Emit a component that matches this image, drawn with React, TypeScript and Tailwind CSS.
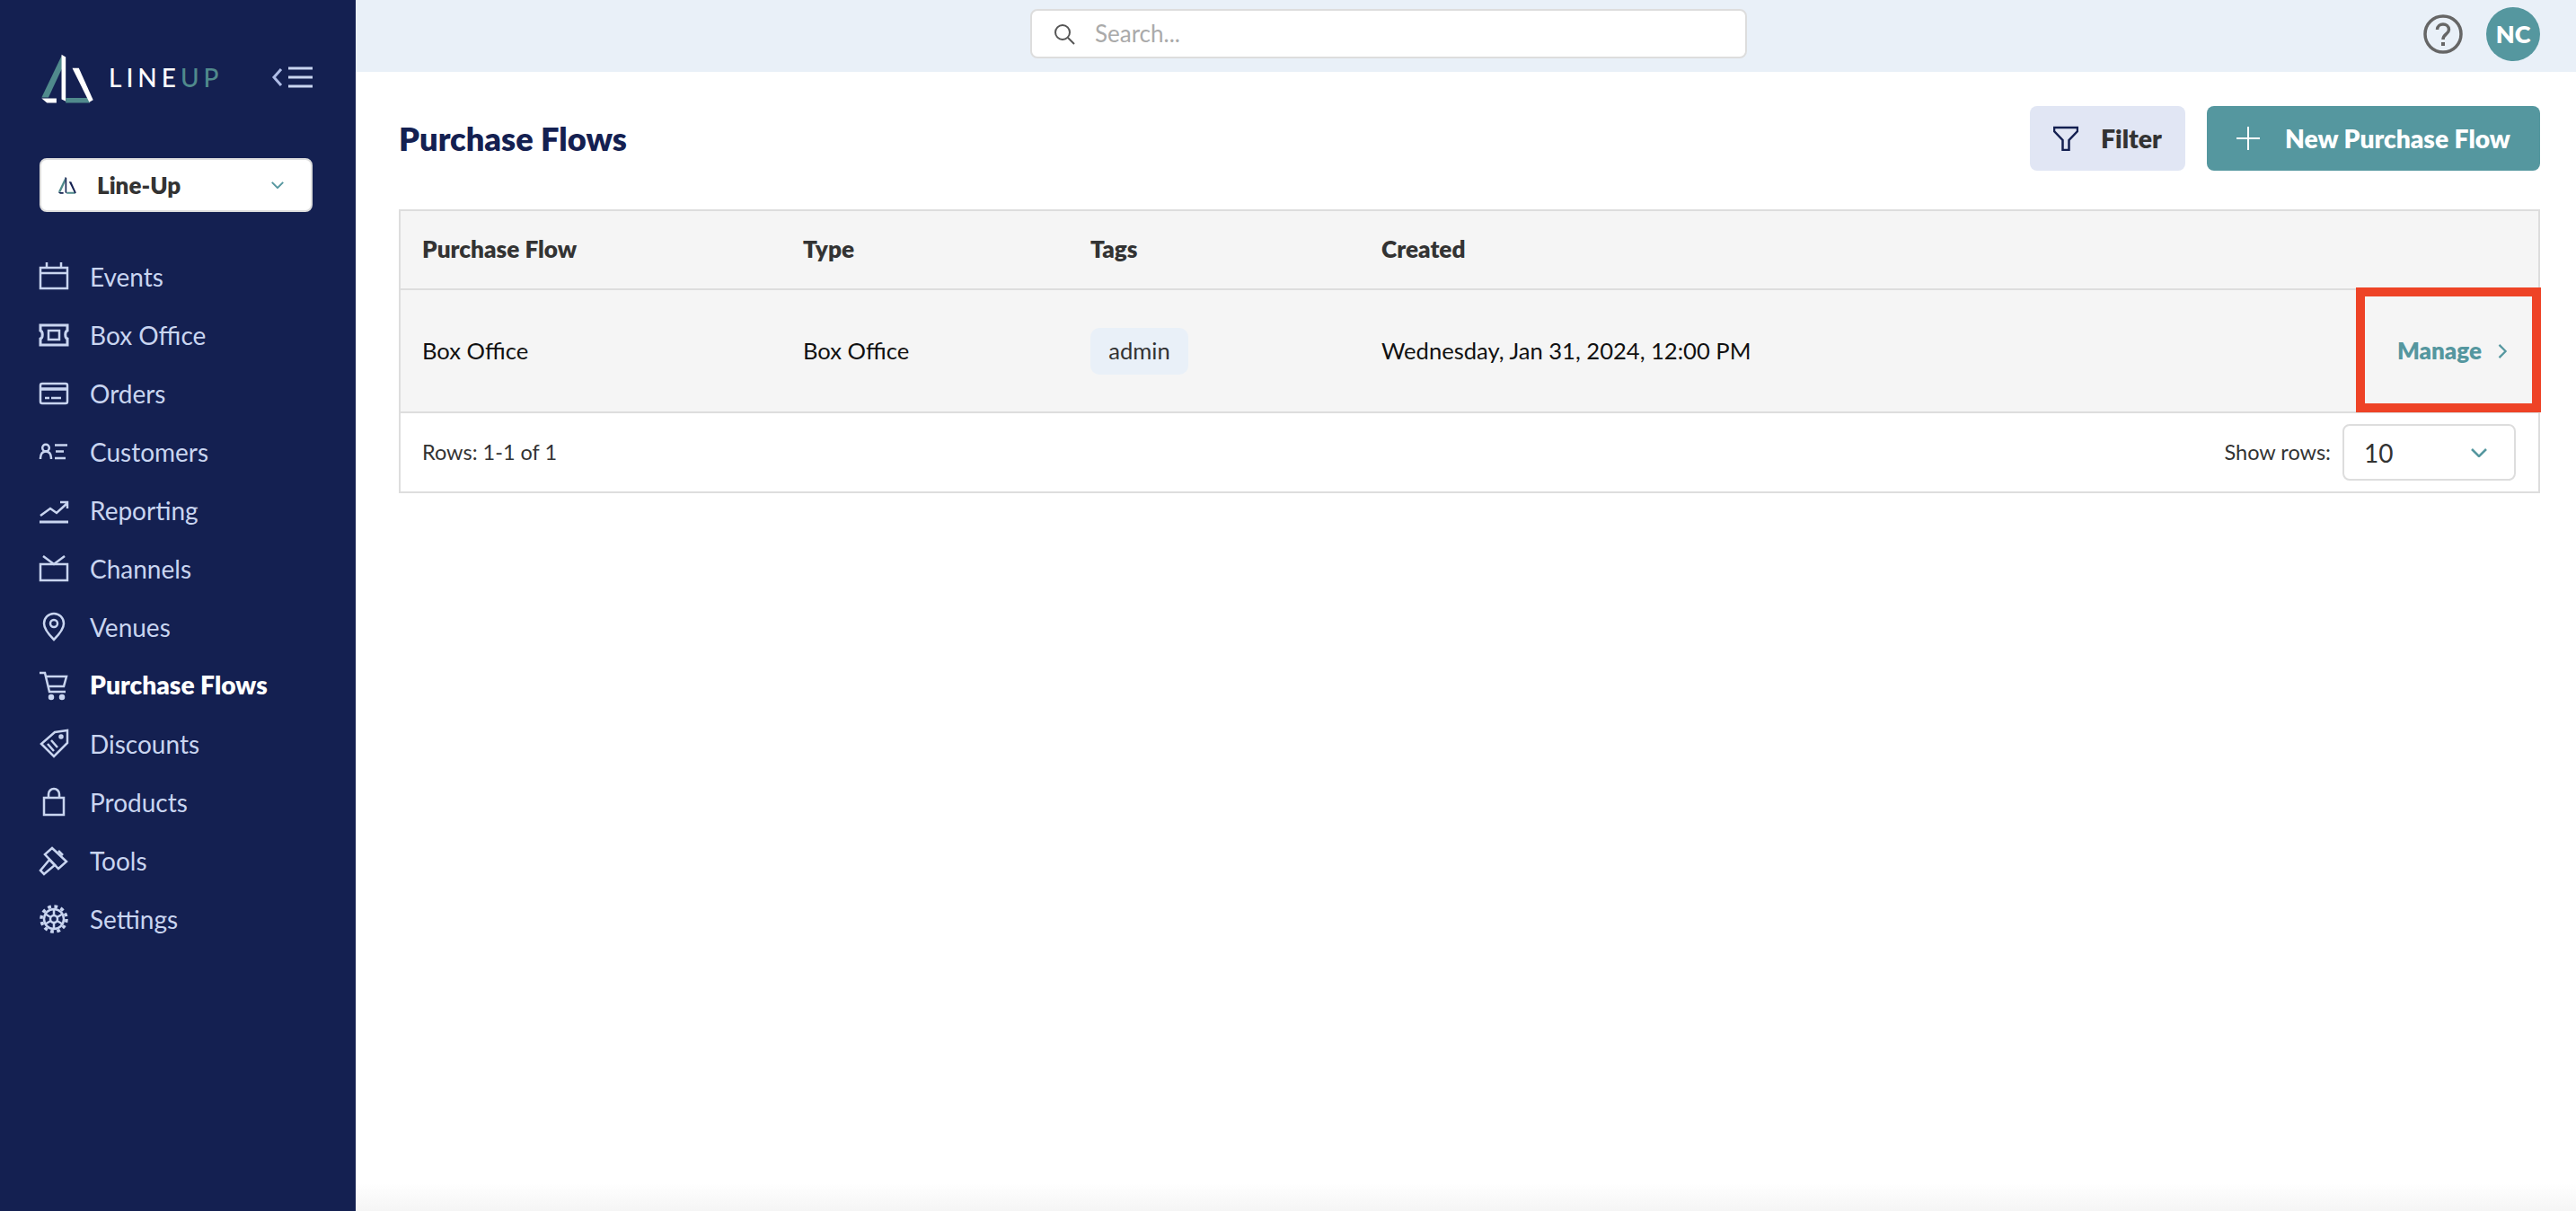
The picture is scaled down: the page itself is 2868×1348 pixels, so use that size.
import { ReactNode } from "react"

const navItems: { label: string; active?: boolean; icon: ReactNode }[] = [
  {
    label: "Events",
    icon: (
      <>
        <rect x="1" y="6" width="30" height="23" />
        <path d="M1 12H31M8 6V0M24 6V0" />
      </>
    ),
  },
  {
    label: "Box Office",
    icon: (
      <>
        <path d="M1 5H31V11C28 12 28 19 31 20V27H1V20C4 19 4 12 1 11Z" strokeWidth="3" />
        <rect x="10" y="11" width="12" height="10" />
      </>
    ),
  },
  {
    label: "Orders",
    icon: (
      <>
        <rect x="1" y="5" width="30" height="22" rx="2" />
        <path d="M1 11H31" strokeWidth="3.5" />
        <path d="M6 21H11M13 21H24" />
      </>
    ),
  },
  {
    label: "Customers",
    icon: (
      <>
        <circle cx="7" cy="11.5" r="3.8" />
        <path d="M1 24C1 19 3 15.5 7 15.5C11 15.5 13 19 13 24" />
        <path d="M17 8.5H31M18 15.5H27M17 23H29" />
      </>
    ),
  },
  {
    label: "Reporting",
    icon: (
      <>
        <path d="M1 22L12 14L19 19L31 8M23 7H31V14" />
        <path d="M0 29H32" strokeWidth="3" />
      </>
    ),
  },
  {
    label: "Channels",
    icon: (
      <>
        <rect x="1" y="11" width="30" height="18" />
        <path d="M4 2L16 11L28 2" />
      </>
    ),
  },
  {
    label: "Venues",
    icon: (
      <>
        <path d="M16 30C10 24 5 18 5 12A11 11 0 0 1 27 12C27 18 22 24 16 30Z" />
        <circle cx="16" cy="12" r="4" />
      </>
    ),
  },
  {
    label: "Purchase Flows",
    active: true,
    icon: (
      <>
        <path d="M0 2H6L11 23H29M7 6H30L27 17H9.5" />
        <circle cx="13" cy="29" r="2" fill="currentColor" />
        <circle cx="25" cy="29" r="2" fill="currentColor" />
      </>
    ),
  },
  {
    label: "Discounts",
    icon: (
      <>
        <path d="M17 3L31 1V15L16 30L2 16Z" />
        <circle cx="24" cy="8" r="1.5" />
        <path d="M9 16L16 24M13 12L20 20" />
      </>
    ),
  },
  {
    label: "Products",
    icon: (
      <>
        <rect x="5" y="11" width="22" height="19" />
        <path d="M10 11V7A6 6 0 0 1 22 7V11" />
      </>
    ),
  },
  {
    label: "Tools",
    icon: (
      <>
        <path d="M14 2L30 17L21 25L6 9Z" />
        <path d="M11 15L17 21L5 31L1 27Z" />
        <path d="M21 5L26 10" />
      </>
    ),
  },
  {
    label: "Settings",
    icon: (
      <>
        <circle cx="16" cy="16" r="11" />
        <circle cx="16" cy="16" r="14" strokeWidth="3.5" strokeDasharray="3.8 3.53" />
        <circle cx="16" cy="16" r="4" />
        <path d="M16 5V12M16 20V27M6.5 10.5L12.5 14M19.5 18L25.5 21.5M6.5 21.5L12.5 18M19.5 14L25.5 10.5" />
      </>
    ),
  },
]

const LogoMark = ({ dark }: { dark?: boolean }) => (
  <svg
    viewBox="130 170 190 180"
    className={dark ? "h-[21px] w-[22px]" : "h-[60px] w-[63px]"}
  >
    <path d="M205 180V225L160 322H137Z" fill={dark ? "#4f8a8b" : "#508a8c"} />
    <path d="M137 325H187V340H155Z" fill={dark ? "#142051" : "#ffffff"} />
    <path d="M204 178L218 186V335L204 328Z" fill={dark ? "#142051" : "#ffffff"} />
    <path d="M218 323H292L300 340H218Z" fill={dark ? "#4f8a8b" : "#508a8c"} />
    <path d="M240 223H262L310 330L297 338Z" fill={dark ? "#142051" : "#ffffff"} />
  </svg>
)

const Chevron = ({ className }: { className: string }) => (
  <svg viewBox="0 0 18 10" fill="none" stroke="#55979f" strokeWidth="2.5" className={className}>
    <path d="M1 1L9 9L17 1" />
  </svg>
)

const Sidebar = () => (
  <aside className="flex h-full w-[396px] shrink-0 flex-col bg-[#142051] pl-[44px] pr-[48px]">
    <div className="flex h-[176px] items-start justify-between">
      <div className="mt-[58px] flex items-start">
        <LogoMark />
        <span className="ml-[14px] mt-[10px] text-[28px] font-medium leading-[36px] tracking-[5px] text-white">
          LINE<span className="text-[#508a8c]">UP</span>
        </span>
      </div>
      <svg viewBox="0 0 46 24" fill="none" strokeWidth="3" className="mt-[74px] h-[24px] w-[46px]">
        <path d="M11 3L3 12L11 21" stroke="#aebce6" />
        <path d="M19 2H46M19 12H46M19 22H46" stroke="#c9d5f0" />
      </svg>
    </div>

    <div className="flex h-[60px] items-center rounded-lg border-2 border-[#dddddd] bg-white pl-[18px] pr-[30px]">
      <LogoMark dark />
      <span className="ml-[22px] flex-1 text-[26px] font-extrabold text-[#333333]">Line-Up</span>
      <Chevron className="h-[8px] w-[14px]" />
    </div>

    <nav className="mt-[39px] flex flex-col">
      {navItems.map((item) => (
        <div
          key={item.label}
          className={`flex h-[65px] items-center gap-[24px] ${
            item.active ? "text-[28.2px] font-extrabold text-white" : "text-[28px] text-[#c9d5f0]"
          }`}
        >
          <svg
            viewBox="0 0 32 32"
            fill="none"
            stroke="#c9d5f0"
            strokeWidth="2.5"
            className="h-[32px] w-[32px] shrink-0 overflow-visible text-[#c9d5f0]"
          >
            {item.icon}
          </svg>
          {item.label}
        </div>
      ))}
    </nav>
  </aside>
)

const TopBar = () => (
  <header className="relative flex h-[80px] shrink-0 items-start bg-[#e9f0f8] pl-[751px] pt-[10px]">
    <div className="flex h-[55px] w-[798px] items-center rounded-lg border-2 border-[#dddddd] bg-white pl-[24px]">
      <svg viewBox="0 0 24 24" fill="none" stroke="#555555" strokeWidth="2" className="h-[24px] w-[24px]">
        <circle cx="10" cy="10" r="8" />
        <path d="M16 16L23 23" />
      </svg>
      <span className="ml-[22px] text-[26px] text-[#aaaaaa]">Search...</span>
    </div>
    <div className="absolute right-[40px] top-[8px] flex items-center gap-[26px]">
      <svg viewBox="0 0 44 44" fill="none" className="h-[44px] w-[44px]">
        <circle cx="22" cy="22" r="20" stroke="#666666" strokeWidth="3.5" />
        <path d="M15.5 17C15.5 9 28.5 9 28.5 17C28.5 22 22 22 22 28" stroke="#666666" strokeWidth="3.5" />
        <rect x="20" y="31" width="4" height="4" fill="#666666" />
      </svg>
      <div className="flex h-[60px] w-[60px] items-center justify-center rounded-full bg-[#55979f] text-[27px] font-extrabold text-white">
        NC
      </div>
    </div>
  </header>
)

const gridCols = "grid grid-cols-[424px_320px_324px_1fr] items-center pl-[24px]"

const PurchaseTable = () => (
  <div className="mt-[43px] border-2 border-[#dddddd]">
    <div className={`${gridCols} h-[88px] border-b-2 border-[#dddddd] bg-[#f5f5f5] text-[26.2px] font-extrabold text-[#333333]`}>
      <span>Purchase Flow</span>
      <span>Type</span>
      <span>Tags</span>
      <span>Created</span>
    </div>
    <div className={`${gridCols} relative h-[137px] border-b-2 border-[#dddddd] bg-[#f5f5f5] text-[25.6px] text-[#111111]`}>
      <span>Box Office</span>
      <span>Box Office</span>
      <span>
        <span className="inline-flex h-[52px] w-[109px] items-center justify-center rounded-[10px] bg-[#e9f0f8] text-[#333333]">
          admin
        </span>
      </span>
      <span className="flex items-center justify-between">
        Wednesday, Jan 31, 2024, 12:00 PM
        <span className="mr-[34px] flex items-center gap-[18px] text-[26px] font-extrabold text-[#55979f]">
          Manage
          <svg viewBox="0 0 11 18" fill="none" stroke="#55979f" strokeWidth="2.5" className="h-[16px] w-[11px]">
            <path d="M1 1L9 9L1 17" />
          </svg>
        </span>
      </span>
      {/* annotation box from the screenshot */}
      <div className="absolute right-[-3px] top-[-3px] h-[139px] w-[206px] border-[10px] border-[#ee4326]" />
    </div>
    <div className="flex h-[87px] items-center justify-between pl-[24px] pr-[25px] text-[23.5px] text-[#333333]">
      <span>Rows: 1-1 of 1</span>
      <div className="flex items-center gap-[13px]">
        <span>Show rows:</span>
        <div className="flex h-[63px] w-[193px] items-center justify-between rounded-lg border-2 border-[#dddddd] pl-[22px] pr-[30px] text-[28px]">
          10
          <Chevron className="h-[10px] w-[18px]" />
        </div>
      </div>
    </div>
  </div>
)

export default function App() {
  return (
    <div className="flex h-screen w-full overflow-hidden bg-white font-['Lato',sans-serif]">
      <Sidebar />
      <main className="flex min-w-0 flex-1 flex-col bg-gradient-to-b from-white from-[97.7%] to-[#f5f5f5]">
        <TopBar />
        <div className="pl-[48px] pr-[40px]">
          <div className="mt-[38px] flex h-[72px] items-center justify-between">
            <h1 className="text-[36.2px] font-extrabold text-[#142051]">Purchase Flows</h1>
            <div className="flex gap-[24px]">
              <button className="flex h-[72px] w-[173px] items-center justify-center gap-[25px] rounded-lg bg-[#e1e6f4] text-[28.4px] font-extrabold text-[#333333]">
                <svg viewBox="0 0 28 28" fill="none" stroke="#142051" strokeWidth="2.5" className="h-[28px] w-[28px]">
                  <path d="M1 2H27V6L17.5 16V27H10.5V16L1 6Z" />
                </svg>
                Filter
              </button>
              <button className="flex h-[72px] w-[371px] items-center justify-center gap-[28px] rounded-lg bg-[#55979f] text-[28.2px] font-extrabold text-white">
                <svg viewBox="0 0 26 26" fill="none" stroke="#ffffff" strokeWidth="2" className="h-[26px] w-[26px]">
                  <path d="M13 0V26M0 13H26" />
                </svg>
                New Purchase Flow
              </button>
            </div>
          </div>
          <PurchaseTable />
        </div>
      </main>
    </div>
  )
}
